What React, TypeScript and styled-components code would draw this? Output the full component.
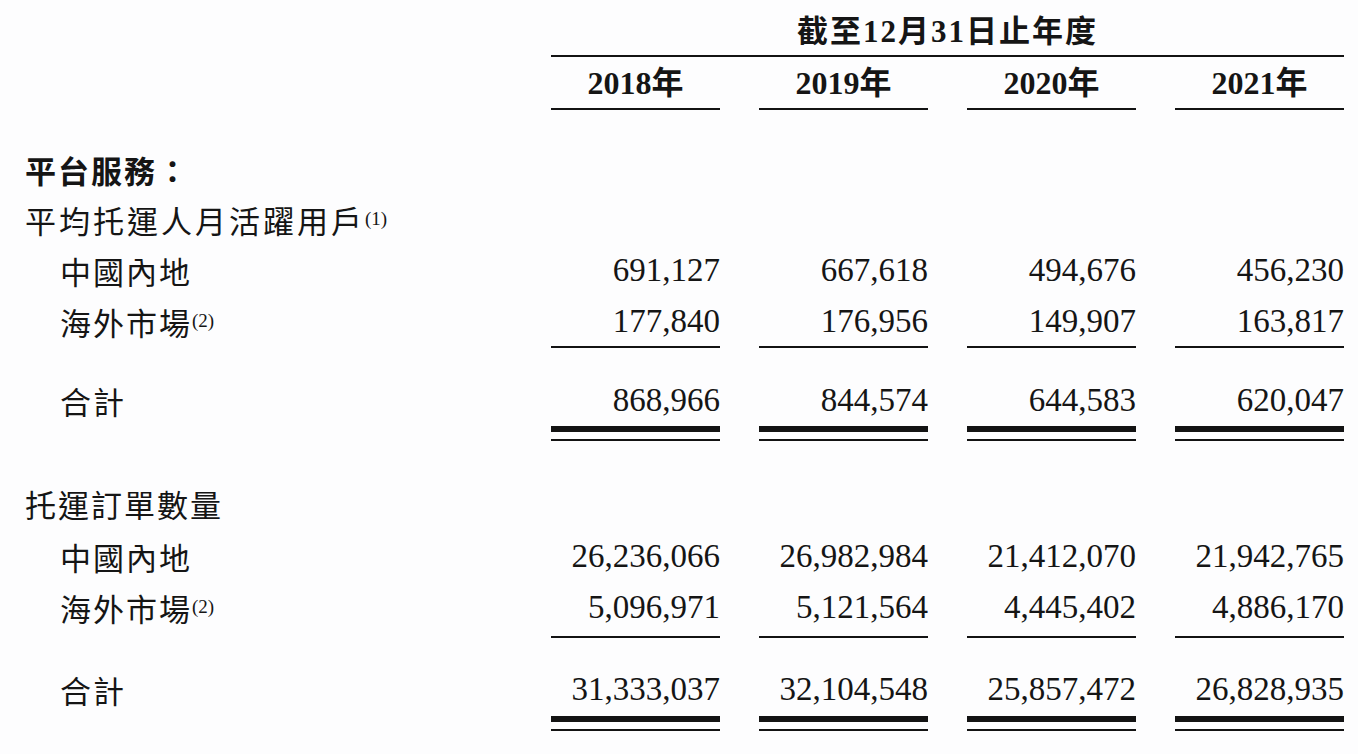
import React from "react";
import styled, { createGlobalStyle } from "styled-components";

const GlobalStyle = createGlobalStyle`
  html, body {
    margin: 0;
    padding: 0;
    background: #fdfdfe;
  }
  body {
    color: #151515;
    font-family: "Noto Sans CJK TC", sans-serif;
  }
`;

const INK = "#131313";

const Table = styled.div`
  width: 1358px;
  box-sizing: border-box;
  padding: 0 14px 0 25px;
`;

const Row = styled.div<{ $h: number; $mt?: number }>`
  display: grid;
  grid-template-columns: 487px repeat(4, 169px);
  column-gap: 39px;
  height: ${(p) => p.$h}px;
  margin-top: ${(p) => p.$mt ?? 0}px;
`;

const Title = styled.div`
  grid-column: 2 / 6;
  display: flex;
  align-items: center;
  justify-content: center;
  box-sizing: border-box;
  padding-top: 7px;
  border-bottom: 2px solid ${INK};
  font-family: "Liberation Serif", "Noto Sans CJK TC", serif;
  font-weight: 700;
  font-size: 31px;
  letter-spacing: 2px;
  line-height: 1;
`;

const Year = styled.div`
  display: flex;
  align-items: center;
  justify-content: center;
  box-sizing: border-box;
  border-bottom: 2px solid ${INK};
  font-family: "Liberation Serif", "Noto Sans CJK TC", serif;
  font-weight: 700;
  font-size: 32px;
  line-height: 1;
`;

const Label = styled.div<{ $indent?: boolean; $bold?: boolean; $spacing?: number }>`
  display: flex;
  align-items: center;
  padding-left: ${(p) => (p.$indent ? 35 : 0)}px;
  font-family: "Noto Sans CJK TC", sans-serif;
  font-weight: ${(p) => (p.$bold ? 700 : 400)};
  font-size: 31px;
  letter-spacing: ${(p) => p.$spacing ?? 2}px;
  line-height: 1;
  white-space: nowrap;
`;

const Sup = styled.span`
  font-family: "Liberation Serif", serif;
  font-size: 19px;
  letter-spacing: 0;
  line-height: 0;
  vertical-align: 10px;
`;

const Num = styled.div`
  display: flex;
  align-items: center;
  justify-content: flex-end;
  font-family: "Liberation Serif", serif;
  font-size: 33px;
  line-height: 1;
`;

const Rule = styled.div<{ $double?: boolean }>`
  box-sizing: border-box;
  height: ${(p) => (p.$double ? 15 : 2)}px;
  border-top: ${(p) => (p.$double ? 6 : 2)}px solid ${INK};
  border-bottom: ${(p) => (p.$double ? `2px solid ${INK}` : "none")};
`;

const years = ["2018年", "2019年", "2020年", "2021年"];

type Line = { label: string; note?: string; values: string[] };

type Head = { label: string; note?: string; bold?: boolean; spacing?: number };

type Block = {
  head: Head[];
  headHeights: number[];
  lines: Line[];
  lineHeights: number[];
  ruleGap: number;
  total: string[];
  totalGap: number;
  doubleGap: number;
  mt: number;
};

const blocks: Block[] = [
  {
    head: [
      { label: "平台服務：", bold: true },
      { label: "平均托運人月活躍用戶", note: "(1)", spacing: 3 },
    ],
    headHeights: [50, 50],
    lines: [
      { label: "中國內地", values: ["691,127", "667,618", "494,676", "456,230"] },
      { label: "海外市場", note: "(2)", values: ["177,840", "176,956", "149,907", "163,817"] },
    ],
    lineHeights: [52, 50],
    ruleGap: 0,
    total: ["868,966", "844,574", "644,583", "620,047"],
    totalGap: 27,
    doubleGap: 1,
    mt: 34,
  },
  {
    head: [{ label: "托運訂單數量" }],
    headHeights: [53],
    lines: [
      { label: "中國內地", values: ["26,236,066", "26,982,984", "21,412,070", "21,942,765"] },
      { label: "海外市場", note: "(2)", values: ["5,096,971", "5,121,564", "4,445,402", "4,886,170"] },
    ],
    lineHeights: [52, 50],
    ruleGap: 4,
    total: ["31,333,037", "32,104,548", "25,857,472", "26,828,935"],
    totalGap: 26,
    doubleGap: 2,
    mt: 36,
  },
];

const Section: React.FC<{ block: Block }> = ({ block }) => (
  <>
    {block.head.map((h, i) => (
      <Row key={h.label} $h={block.headHeights[i]} $mt={i === 0 ? block.mt : 0}>
        <Label $bold={h.bold} $spacing={h.spacing}>
          {h.label}
          {h.note && <Sup>{h.note}</Sup>}
        </Label>
      </Row>
    ))}
    {block.lines.map((line, i) => (
      <Row key={line.label} $h={block.lineHeights[i]}>
        <Label $indent>
          {line.label}
          {line.note && <Sup>{line.note}</Sup>}
        </Label>
        {line.values.map((v, j) => (
          <Num key={j}>{v}</Num>
        ))}
      </Row>
    ))}
    <Row $h={2} $mt={block.ruleGap}>
      <div />
      {years.map((y) => (
        <Rule key={y} />
      ))}
    </Row>
    <Row $h={50} $mt={block.totalGap}>
      <Label $indent>合計</Label>
      {block.total.map((v, j) => (
        <Num key={j}>{v}</Num>
      ))}
    </Row>
    <Row $h={15} $mt={block.doubleGap}>
      <div />
      {years.map((y) => (
        <Rule key={y} $double />
      ))}
    </Row>
  </>
);

export default function App() {
  return (
    <>
      <GlobalStyle />
      <Table>
        <Row $h={57}>
          <div />
          <Title>截至12月31日止年度</Title>
        </Row>
        <Row $h={53}>
          <div />
          {years.map((y) => (
            <Year key={y}>{y}</Year>
          ))}
        </Row>
        {blocks.map((b, i) => (
          <Section key={i} block={b} />
        ))}
      </Table>
    </>
  );
}
